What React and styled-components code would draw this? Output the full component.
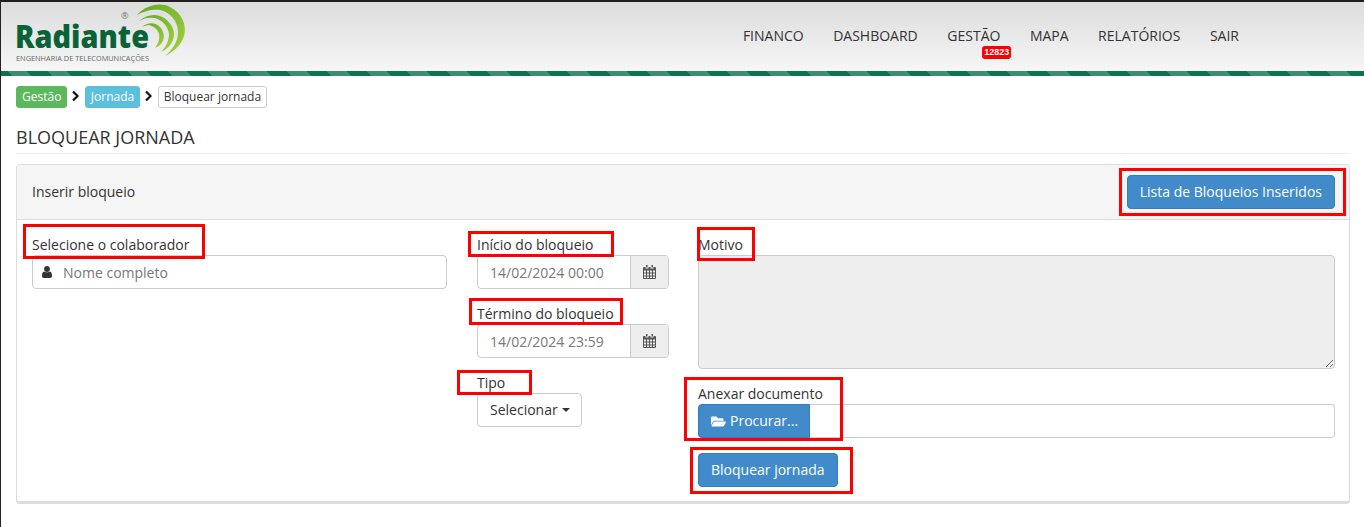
import styled, { createGlobalStyle } from "styled-components";
import { FaFolderOpen } from "react-icons/fa";

const GlobalStyle = createGlobalStyle`
  html, body {
    margin: 0;
    background: #fff;
  }
  body {
    font-family: "Open Sans", "Liberation Sans", sans-serif;
    font-size: 14px;
    line-height: 20px;
    color: #333;
  }
  * {
    box-sizing: border-box;
  }
`;

const Page = styled.div`
  position: relative;
  width: 1364px;
  height: 527px;
  overflow: hidden;
  border-left: 1px solid #222;
`;

const TopBar = styled.header`
  height: 76px;
  display: flex;
  justify-content: space-between;
  border-top: 2px solid #231f20;
  border-bottom: 5px solid #0b7350;
  background: linear-gradient(#dcdcdc, #f6f6f6);
  position: relative;
`;

const Stripes = styled.div`
  position: absolute;
  left: 0;
  right: 0;
  bottom: -5px;
  height: 5px;
  background: repeating-linear-gradient(
    45deg,
    #0b7350 0 7.8px,
    #3a8f70 7.8px 21.9px,
    #0b7350 21.9px 28.28px
  );
`;

const LogoBox = styled.div`
  margin-left: 14px;
  width: 175px;
  height: 69px;
`;

const Nav = styled.nav`
  display: flex;
  gap: 29.5px;
  padding: 24px 125px 0 0;
`;

const NavLink = styled.a`
  position: relative;
  height: 20px;
  color: #333;
`;

const Badge = styled.span`
  position: absolute;
  left: 35px;
  top: 20px;
  padding: 0 2px;
  height: 13px;
  border-radius: 3px;
  background: #f00;
  color: #fff;
  font-family: "Liberation Sans", sans-serif;
  font-size: 9px;
  font-weight: 700;
  line-height: 13px;
`;

const Content = styled.main`
  padding: 10px 14px 0 15px;
`;

const Crumbs = styled.div`
  display: flex;
  align-items: center;
  height: 22px;
`;

const Crumb = styled.span`
  height: 22px;
  padding: 0 5px;
  border-radius: 3px;
  border: 1px solid ${(props) => props.$border};
  background: ${(props) => props.$bg};
  color: ${(props) => props.$color};
  font-size: 12px;
  line-height: 20px;
`;

const Chevron = styled.svg`
  width: 17.5px;
  height: 12px;
  flex: none;
  margin-top: -3px;
`;

const Title = styled.h1`
  margin: 19px 0 10px;
  padding-bottom: 6px;
  height: 27px;
  border-bottom: 1px solid #eee;
  font-size: 18px;
  font-weight: 500;
  line-height: 20px;
  color: #333;
  text-transform: uppercase;
`;

const Panel = styled.section`
  height: 340px;
  border: 1px solid #ddd;
  border-bottom: 3px solid #ddd;
  border-radius: 4px;
`;

const PanelHead = styled.div`
  height: 55px;
  padding: 0 14px 0 15px;
  display: flex;
  align-items: center;
  justify-content: space-between;
  background: #f5f5f5;
  border-bottom: 1px solid #ddd;
  border-radius: 3px 3px 0 0;
`;

const PanelBody = styled.div`
  padding: 15px 14px 0 15px;
  display: grid;
  grid-template-columns: 445px 221px 1fr;
`;

const Column = styled.div`
  display: flex;
  flex-direction: column;
  gap: 15px;
`;

const Field = styled.div`
  width: ${(props) => props.$width || "100%"};
`;

const Label = styled.label`
  display: block;
  height: 20px;
  font-weight: 500;
  color: #333;
`;

const InputGroup = styled.div`
  display: flex;
  height: 34px;
  border: 1px solid #ccc;
  border-radius: 4px;
  overflow: hidden;
  background: #fff;
`;

const FakeInput = styled.div`
  flex: 1;
  padding: 7px 12px 5px;
  color: #777;
  white-space: nowrap;
`;

const NameInput = styled(FakeInput)`
  padding-left: 11px;
`;

const PersonIcon = styled.span`
  width: 19px;
  display: flex;
  align-items: center;
  justify-content: flex-end;
`;

const Addon = styled.span`
  width: 38px;
  display: flex;
  align-items: center;
  justify-content: center;
  background: #eee;
  border-left: 1px solid #ccc;
  color: #555;
`;

const Dropdown = styled.button`
  display: flex;
  align-items: center;
  width: 105px;
  height: 34px;
  padding: 0 12px;
  background: #fff;
  border: 1px solid #ccc;
  border-radius: 4px;
  color: #333;
  font: inherit;
`;

const Caret = styled.span`
  margin-left: 4px;
  border-top: 4px solid #333;
  border-left: 4px solid transparent;
  border-right: 4px solid transparent;
`;

const TextArea = styled.textarea`
  display: block;
  width: 100%;
  height: 114px;
  background: #eee;
  border: 1px solid #ccc;
  border-radius: 4px;
`;

const FileRow = styled.div`
  display: flex;
  height: 34px;
  border: 1px solid #ccc;
  border-left: none;
  border-radius: 4px;
`;

const Button = styled.button`
  height: 34px;
  padding: 0 12px;
  display: inline-flex;
  align-items: center;
  gap: 4px;
  background: #428bca;
  border: 1px solid #357ebd;
  border-radius: 4px;
  color: #fff;
  font: inherit;
  white-space: nowrap;
`;

const FileButton = styled(Button)`
  margin: -1px 0;
  padding: 0 11px 0 12px;
  border-radius: 4px 0 0 4px;
  svg {
    width: 15px;
    height: 15px;
  }
`;

const Mark = styled.div`
  position: absolute;
  left: ${(props) => props.$x}px;
  top: ${(props) => props.$y}px;
  width: ${(props) => props.$w}px;
  height: ${(props) => props.$h}px;
  border: 3px solid #f00;
  pointer-events: none;
`;

// calendario antigo do font-awesome 4, o pacote so tem a versao nova
function CalendarIcon() {
  return (
    <svg width="13" height="14" viewBox="0 0 13 14" fill="#555">
      <path d="M3 0h1.5v2.5H3zM8.5 0H10v2.5H8.5z" />
      <path
        fillRule="evenodd"
        d="M1 2h1.5v1.5h3V2h2v1.5h3V2H12a1 1 0 0 1 1 1v10a1 1 0 0 1-1 1H1a1 1 0 0 1-1-1V3a1 1 0 0 1 1-1zM1 5.5v2h2v-2zm3 0v2h2v-2zm3 0v2h2v-2zm3 0v2h2v-2zM1 8.5v2h2v-2zm3 0v2h2v-2zm3 0v2h2v-2zm3 0v2h2v-2zM1 11.5V13h2v-1.5zm3 0V13h2v-1.5zm3 0V13h2v-1.5zm3 0V13h2v-1.5z"
      />
    </svg>
  );
}

function UserIcon() {
  return (
    <svg width="10" height="12" viewBox="0 0 10 12" fill="#333">
      <circle cx="5" cy="3" r="2.9" />
      <path d="M2 5.4C3 6.4 7 6.4 8 5.4c1.4.4 2 2 2 4.6 0 1.2-.8 2-1.8 2H1.8C.8 12 0 11.2 0 10c0-2.6.6-4.2 2-4.6z" />
    </svg>
  );
}

function Logo() {
  return (
    <LogoBox>
      <svg width="175" height="69" viewBox="0 0 175 69">
        <defs>
          <linearGradient id="arc" x1="0" y1="0" x2="1" y2="1">
            <stop offset="0" stopColor="#5fa828" />
            <stop offset="1" stopColor="#a6d03c" />
          </linearGradient>
        </defs>
        <g fill="url(#arc)" transform="translate(-15 -2)">
          <path d="M137 15C146 5 160 2 170 7c12 6 17 18 14 29-3 10-11 16-19 20 7-6 13-14 13-24 0-11-8-20-18-22-8-1-16 1-23 5z" />
          <path d="M139 21c8-7 18-8 25-3 8 5 12 14 9 22-2 5-7 10-12 12 5-5 8-11 8-18-1-8-7-14-14-16-6-1-11 0-16 3z" />
          <path d="M142 27c6-5 13-5 18 0s5 13 1 17c-2 2-4 3-6 4 3-4 5-9 4-14-1-5-6-8-10-9-3 0-5 1-7 2z" />
        </g>
        <text x="106" y="17" fontFamily="'Open Sans', sans-serif" fontSize="9" fill="#777">
          ®
        </text>
        <text
          x="0"
          y="46"
          fontFamily="'Open Sans', sans-serif"
          fontSize="32"
          fontWeight="800"
          fill="#0a6338"
          textLength="134"
          lengthAdjust="spacingAndGlyphs"
        >
          Radiante
        </text>
        <text
          x="1"
          y="59"
          fontFamily="'Open Sans', sans-serif"
          fontSize="7"
          fill="#666"
          textLength="133"
          lengthAdjust="spacingAndGlyphs"
        >
          ENGENHARIA DE TELECOMUNICAÇÕES
        </text>
      </svg>
    </LogoBox>
  );
}

function CrumbArrow() {
  return (
    <Chevron viewBox="0 0 17.5 12">
      <path d="M6 1.5 10.5 6 6 10.5" fill="none" stroke="#111" strokeWidth="2.2" />
    </Chevron>
  );
}

function App() {
  return (
    <Page>
      <GlobalStyle />
      <TopBar>
        <Logo />
        <Nav>
          <NavLink>FINANCO</NavLink>
          <NavLink>DASHBOARD</NavLink>
          <NavLink>
            GESTÃO
            <Badge>12823</Badge>
          </NavLink>
          <NavLink>MAPA</NavLink>
          <NavLink>RELATÓRIOS</NavLink>
          <NavLink>SAIR</NavLink>
        </Nav>
        <Stripes />
      </TopBar>
      <Content>
        <Crumbs>
          <Crumb $bg="#5cb85c" $border="#5cb85c" $color="#fff">Gestão</Crumb>
          <CrumbArrow />
          <Crumb $bg="#5bc0de" $border="#5bc0de" $color="#fff">Jornada</Crumb>
          <CrumbArrow />
          <Crumb $bg="#fff" $border="#ccc" $color="#333">Bloquear jornada</Crumb>
        </Crumbs>
        <Title>Bloquear jornada</Title>
        <Panel>
          <PanelHead>
            <span>Inserir bloqueio</span>
            <Button>Lista de Bloqueios Inseridos</Button>
          </PanelHead>
          <PanelBody>
            <Column>
              <Field $width="415px">
                <Label>Selecione o colaborador</Label>
                <InputGroup>
                  <PersonIcon><UserIcon /></PersonIcon>
                  <NameInput>Nome completo</NameInput>
                </InputGroup>
              </Field>
            </Column>
            <Column>
              <Field $width="192px">
                <Label>Início do bloqueio</Label>
                <InputGroup>
                  <FakeInput>14/02/2024 00:00</FakeInput>
                  <Addon><CalendarIcon /></Addon>
                </InputGroup>
              </Field>
              <Field $width="192px">
                <Label>Término do bloqueio</Label>
                <InputGroup>
                  <FakeInput>14/02/2024 23:59</FakeInput>
                  <Addon><CalendarIcon /></Addon>
                </InputGroup>
              </Field>
              <Field $width="192px">
                <Label>Tipo</Label>
                <Dropdown>Selecionar<Caret /></Dropdown>
              </Field>
            </Column>
            <Column>
              <Field>
                <Label>Motivo</Label>
                <TextArea disabled />
              </Field>
              <Field>
                <Label>Anexar documento</Label>
                <FileRow>
                  <FileButton><FaFolderOpen /> Procurar...</FileButton>
                </FileRow>
              </Field>
              <Field>
                <Button>Bloquear jornada</Button>
              </Field>
            </Column>
          </PanelBody>
        </Panel>
      </Content>
      <Mark $x={1118} $y={168} $w={227} $h={48} />
      <Mark $x={22} $y={224} $w={182} $h={35} />
      <Mark $x={467} $y={231} $w={146} $h={26} />
      <Mark $x={468} $y={298} $w={154} $h={27} />
      <Mark $x={456} $y={370} $w={75} $h={25} />
      <Mark $x={696} $y={227} $w={58} $h={34} />
      <Mark $x={683} $y={377} $w={159} $h={64} />
      <Mark $x={689} $y={447} $w={163} $h={47} />
    </Page>
  );
}

export default App;
